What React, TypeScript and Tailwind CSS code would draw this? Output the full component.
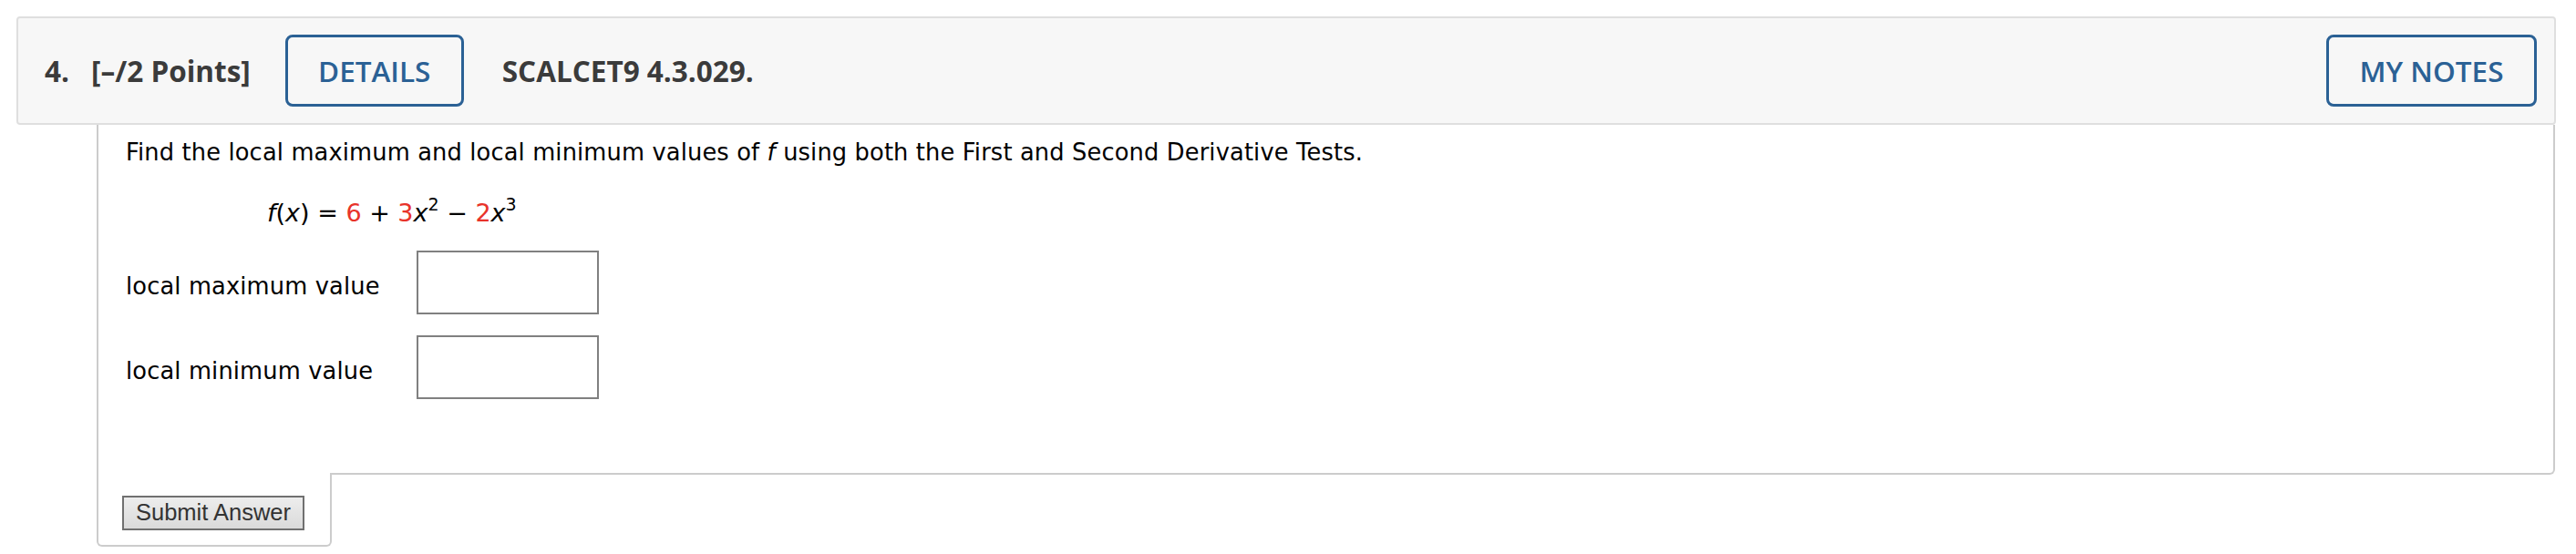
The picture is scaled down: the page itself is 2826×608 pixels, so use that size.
import React from "react";

const body = { fontFamily: '"DejaVu Sans", Verdana, sans-serif' };

function Sup({ children }: { children: React.ReactNode }) {
  return (
    <span className="relative -top-[12px] text-[19px] leading-none not-italic">{children}</span>
  );
}

export default function App() {
  return (
    <div className="w-[2826px] h-[608px] bg-white pt-[18px] overflow-hidden">
      {/* Header */}
      <div
        className="ml-[18px] w-[2786px] h-[119px] flex items-center bg-[#f7f7f7] border-2 border-[#dfdfdf] rounded-[4px] pl-[29px] pr-[19px]"
        style={{ fontFamily: '"Open Sans", sans-serif' }}
      >
        <span className="text-[31.5px] font-bold text-[#3b3b3b] leading-none">
          <span className="mr-[24px]">4.</span>[–/2 Points]
        </span>
        <button className="ml-[38px] w-[196px] h-[79px] border-[3px] border-[#2b6195] rounded-[8px] text-[31.5px] font-semibold text-[#2b6195] leading-none flex items-center justify-center">
          DETAILS
        </button>
        <span className="ml-[42px] text-[31.5px] font-bold text-[#3b3b3b] leading-none">
          SCALCET9 4.3.029.
        </span>
        <div className="flex-1" />
        <button className="w-[231px] h-[79px] border-[3px] border-[#2b6195] rounded-[8px] text-[31.5px] font-semibold text-[#2b6195] leading-none flex items-center justify-center">
          MY NOTES
        </button>
      </div>

      {/* Question panel */}
      <div className="ml-[106px] w-[2697px]">
        <div
          className="h-[384px] border-x-2 border-b-2 border-[#cccccc] rounded-br-[6px] pt-[16px] pl-[30px] text-black"
          style={body}
        >
          <p className="text-[25.7px] tracking-[0.15px] leading-[29px]">
            Find the local maximum and local minimum values of <i>f</i> using both the First and Second Derivative Tests.
          </p>
          <div className="mt-[36px] ml-[155px] text-[27px] leading-[32px] whitespace-nowrap">
            <i>f</i>(<i>x</i>) = <span className="text-[#e8332a]">6</span> + <span className="text-[#e8332a]">3</span>
            <i>x</i>
            <Sup>2</Sup> − <span className="text-[#e8332a]">2</span>
            <i>x</i>
            <Sup>3</Sup>
          </div>
          <div className="mt-[25px] flex flex-col gap-[23px]">
            <div className="flex items-start">
              <span className="w-[319px] pt-[25px] text-[25.7px] tracking-[0.15px] leading-[29px]">local maximum value</span>
              <input className="w-[200px] h-[70px] border-2 border-[#808080] bg-white outline-none" />
            </div>
            <div className="flex items-start">
              <span className="w-[319px] pt-[25px] text-[25.7px] tracking-[0.15px] leading-[29px]">local minimum value</span>
              <input className="w-[200px] h-[70px] border-2 border-[#808080] bg-white outline-none" />
            </div>
          </div>
        </div>
        <div className="relative -mt-[2px] w-[258px] h-[81px] bg-white border-x-2 border-b-2 border-[#cccccc] rounded-b-[6px] pt-[25px] pl-[26px]">
          <button
            className="w-[200px] h-[38px] border-2 border-[#707070] bg-gradient-to-b from-[#ededed] to-[#dadada] text-[25.5px] leading-none text-[#333333] flex items-center justify-center"
            style={{ fontFamily: '"Liberation Sans", Arial, sans-serif' }}
          >
            Submit Answer
          </button>
        </div>
      </div>
    </div>
  );
}
